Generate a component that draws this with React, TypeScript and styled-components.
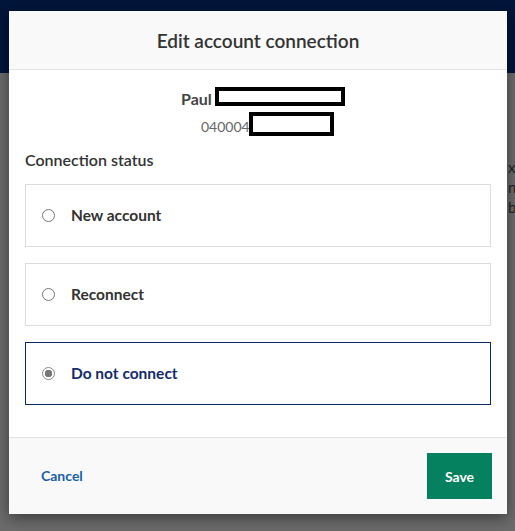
import styled, { createGlobalStyle } from 'styled-components'
import { useState } from 'react'

const GlobalStyle = createGlobalStyle`
  html, body {
    margin: 0;
    padding: 0;
  }
  body {
    font-family: Lato, 'Open Sans', sans-serif;
    background: #6b6b6b;
  }
`

type Status = 'new' | 'reconnect' | 'none'

const OPTIONS: { value: Status; label: string }[] = [
  { value: 'new', label: 'New account' },
  { value: 'reconnect', label: 'Reconnect' },
  { value: 'none', label: 'Do not connect' },
]

const App = () => {
  const [status, setStatus] = useState<Status>('none')

  return (
    <Page>
      <GlobalStyle />
      <TopBar />
      <PageBody>
        <PeekText>
          <span>x</span>
          <span>ne</span>
          <span>b</span>
        </PeekText>
      </PageBody>

      <Modal>
        <ModalHeader>Edit account connection</ModalHeader>
        <ModalBody>
          <NameRow>
            <NameText>
              Paul
              <Redaction $left={34} $top={-2} $width={130} $height={19} />
            </NameText>
          </NameRow>
          <AccountRow>
            <AccountText>
              040004
              <Redaction $left={48} $top={-6} $width={85} $height={24} />
            </AccountText>
          </AccountRow>

          <SectionTitle>Connection status</SectionTitle>
          <OptionList>
            {OPTIONS.map((o) => (
              <OptionCard
                key={o.value}
                $selected={status === o.value}
                onClick={() => setStatus(o.value)}
              >
                <Radio $checked={status === o.value} />
                <OptionLabel $selected={status === o.value}>{o.label}</OptionLabel>
              </OptionCard>
            ))}
          </OptionList>
        </ModalBody>
        <ModalFooter>
          <CancelButton>Cancel</CancelButton>
          <SaveButton>Save</SaveButton>
        </ModalFooter>
      </Modal>
    </Page>
  )
}

export default App

const Page = styled.div`
  position: relative;
  width: 515px;
  height: 531px;
  overflow: hidden;
  background: #6b6b6b;
`

const TopBar = styled.div`
  height: 73px;
  background: #02153a;
`

const PageBody = styled.div`
  padding-top: 84px;
  padding-left: 508px;
`

const PeekText = styled.div`
  display: flex;
  flex-direction: column;
  font-size: 15px;
  line-height: 20px;
  color: #1f1f1f;
  white-space: nowrap;
`

const Modal = styled.div`
  position: absolute;
  top: 11px;
  left: 9px;
  width: 498px;
  height: 503px;
  display: flex;
  flex-direction: column;
  background: #fff;
  box-shadow: 0 4px 14px rgba(0, 0, 0, 0.45);
`

const ModalHeader = styled.div`
  height: 59px;
  box-sizing: border-box;
  display: flex;
  align-items: center;
  justify-content: center;
  background: #f9f9f9;
  border-bottom: 1px solid #e2e2e2;
  color: #333;
  font-size: 19px;
  font-weight: 600;
`

const ModalBody = styled.div`
  flex: 1;
  padding: 19px 16px 0;
`

const NameRow = styled.div`
  padding-left: 156px;
  font-size: 16px;
  line-height: 20px;
  font-weight: 700;
  color: #444;
`

const NameText = styled.span`
  position: relative;
`

const AccountRow = styled.div`
  margin-top: 9px;
  padding-left: 176px;
  font-size: 14px;
  line-height: 18px;
  color: #666;
`

const AccountText = styled.span`
  position: relative;
`

const Redaction = styled.span<{
  $left: number
  $top: number
  $width: number
  $height: number
}>`
  position: absolute;
  left: ${(p) => p.$left}px;
  top: ${(p) => p.$top}px;
  width: ${(p) => p.$width}px;
  height: ${(p) => p.$height}px;
  box-sizing: border-box;
  border: 4px solid #000;
  background: #fff;
`

const SectionTitle = styled.div`
  margin-top: 14px;
  font-size: 16px;
  line-height: 20px;
  font-weight: 600;
  color: #333;
`

const OptionList = styled.div`
  display: flex;
  flex-direction: column;
  gap: 16px;
  margin-top: 14px;
`

const OptionCard = styled.div<{ $selected: boolean }>`
  height: 63px;
  box-sizing: border-box;
  display: flex;
  align-items: center;
  gap: 16px;
  padding-left: 16px;
  padding-bottom: 1px;
  border: 1px solid ${(p) => (p.$selected ? '#0b2a6b' : '#dcdcdc')};
  cursor: pointer;
`

const Radio = styled.span<{ $checked: boolean }>`
  width: 13px;
  height: 13px;
  box-sizing: border-box;
  border-radius: 50%;
  border: 1px solid ${(p) => (p.$checked ? '#8a8a8a' : '#767676')};
  background: ${(p) =>
    p.$checked
      ? 'radial-gradient(circle, #777 0 3.5px, #fff 4px)'
      : '#fff'};
`

const OptionLabel = styled.span<{ $selected: boolean }>`
  font-size: 15.5px;
  font-weight: 700;
  color: ${(p) => (p.$selected ? '#142c6b' : '#333')};
`

const ModalFooter = styled.div`
  height: 77px;
  box-sizing: border-box;
  display: flex;
  align-items: center;
  justify-content: space-between;
  padding: 0 15px;
  background: #f9f9f9;
  border-top: 1px solid #e2e2e2;
`

const CancelButton = styled.button`
  border: none;
  background: none;
  padding: 0 16px 2px 17px;
  height: 46px;
  font-family: Lato, sans-serif;
  font-size: 14px;
  font-weight: 700;
  color: #1a5fa8;
  cursor: pointer;
`

const SaveButton = styled.button`
  width: 65px;
  height: 46px;
  border: none;
  background: #058160;
  color: #fff;
  font-family: Lato, sans-serif;
  font-size: 14px;
  font-weight: 700;
  cursor: pointer;
`
